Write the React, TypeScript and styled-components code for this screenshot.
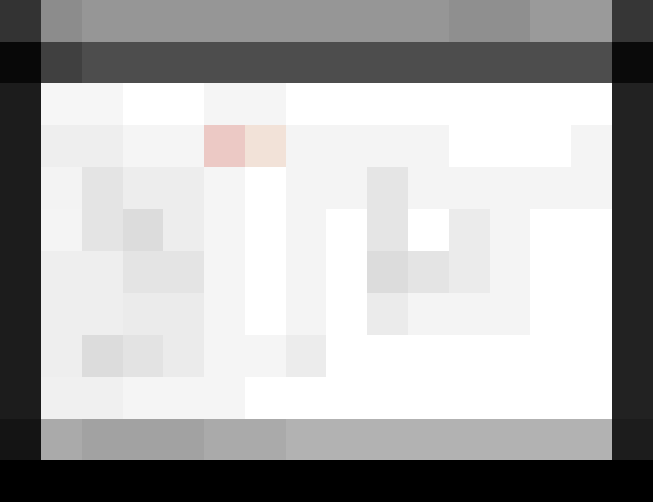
import { ReactElement } from 'react';
import styled, { createGlobalStyle } from 'styled-components';

const GlobalStyle = createGlobalStyle`
  html, body {
    background: #000;
    margin: 0;
    padding: 0;
  }
`;

const Mosaic = styled.div`
  display: grid;
  grid-template-columns: 41px repeat(14, 1fr) 41px;
  grid-template-rows: 42px 41px repeat(8, 42px) 41px 42px;
  height: 502px;
  overflow: hidden;
  width: 653px;
`;

const Tile = styled.div<{ $color: string; $span: number }>`
  background: ${p => p.$color};
  grid-column: span ${p => p.$span};
`;

// each row: [colour, columns], 16 columns in all
type Run = [string, number];

const rows: Run[][] = [
  [['#333', 1], ['#8c8c8c', 1], ['#969696', 9], ['#8f8f8f', 2], ['#9a9a9a', 2], ['#363636', 1]],
  [['#080808', 1], ['#404040', 1], ['#4d4d4d', 13], ['#0a0a0a', 1]],
  [['#1c1c1c', 1], ['#f6f6f6', 2], ['#fff', 2], ['#f5f5f5', 2], ['#fff', 8], ['#222', 1]],
  [['#1c1c1c', 1], ['#eee', 2], ['#f5f5f5', 2], ['#ecc9c5', 1], ['#f2e2d8', 1], ['#f4f4f4', 4], ['#fff', 3], ['#f4f4f4', 1], ['#222', 1]],
  [['#1c1c1c', 1], ['#f3f3f3', 1], ['#e4e4e4', 1], ['#ededed', 2], ['#f5f5f5', 1], ['#fff', 1], ['#f4f4f4', 2], ['#e5e5e5', 1], ['#f4f4f4', 5], ['#222', 1]],
  [['#1c1c1c', 1], ['#f4f4f4', 1], ['#e4e4e4', 1], ['#dcdcdc', 1], ['#ededed', 1], ['#f5f5f5', 1], ['#fff', 1], ['#f4f4f4', 1], ['#fff', 1], ['#e5e5e5', 1], ['#fff', 1], ['#ebebeb', 1], ['#f4f4f4', 1], ['#fff', 2], ['#222', 1]],
  [['#1c1c1c', 1], ['#eee', 2], ['#e4e4e4', 2], ['#f5f5f5', 1], ['#fff', 1], ['#f4f4f4', 1], ['#fff', 1], ['#dcdcdc', 1], ['#e4e4e4', 1], ['#ebebeb', 1], ['#f4f4f4', 1], ['#fff', 2], ['#222', 1]],
  [['#1c1c1c', 1], ['#eee', 2], ['#ebebeb', 2], ['#f5f5f5', 1], ['#fff', 1], ['#f4f4f4', 1], ['#fff', 1], ['#ebebeb', 1], ['#f4f4f4', 3], ['#fff', 2], ['#222', 1]],
  [['#1c1c1c', 1], ['#eee', 1], ['#dcdcdc', 1], ['#e3e3e3', 1], ['#ebebeb', 1], ['#f5f5f5', 2], ['#ececec', 1], ['#fff', 7], ['#222', 1]],
  [['#1c1c1c', 1], ['#f0f0f0', 2], ['#f5f5f5', 3], ['#fff', 9], ['#222', 1]],
  [['#141414', 1], ['#aaa', 1], ['#a2a2a2', 3], ['#aaa', 2], ['#b2b2b2', 8], ['#1c1c1c', 1]],
  [['#000', 16]],
];

function App(): ReactElement {
  return (
    <>
      <GlobalStyle />
      <Mosaic>
        {rows.flatMap((row, r) =>
          row.map(([color, span], i) => <Tile key={`${r}-${i}`} $color={color} $span={span} />),
        )}
      </Mosaic>
    </>
  );
}

export default App;
